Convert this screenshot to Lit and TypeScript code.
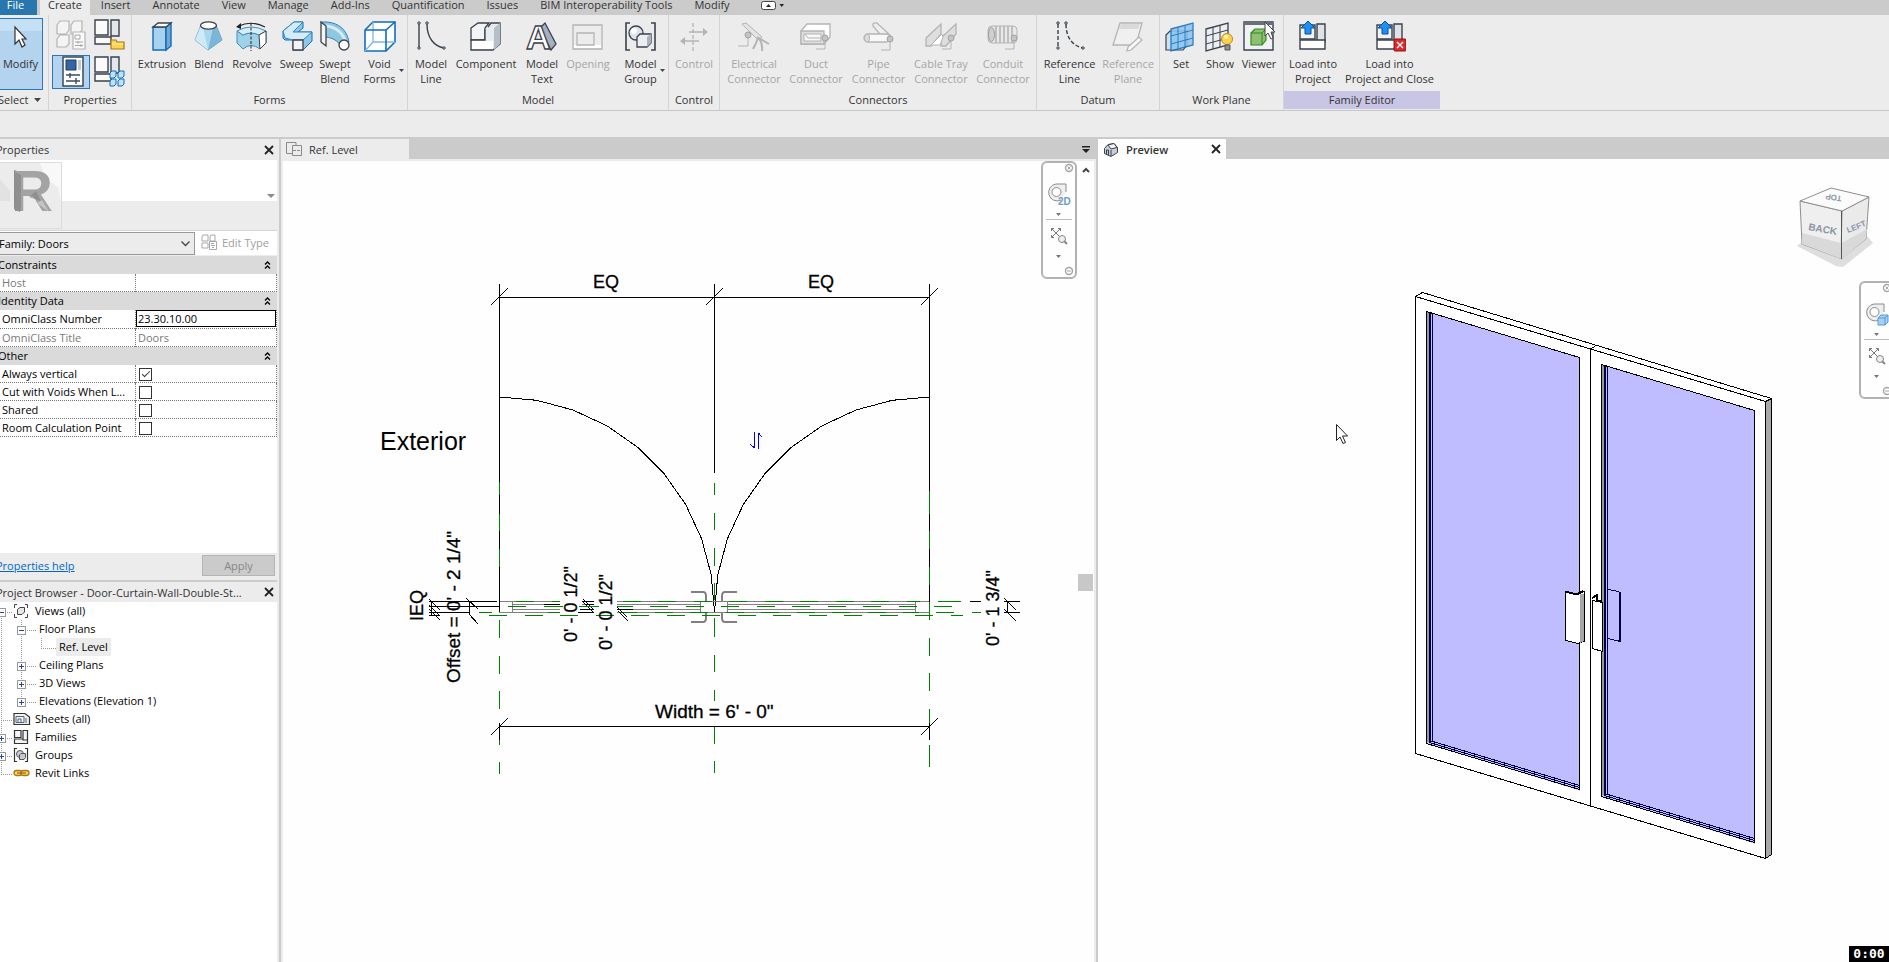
import { LitElement, html, svg, css, nothing } from 'lit';
import { customElement, property, state } from 'lit/decorators.js';
import { classMap } from 'lit/directives/class-map.js';
import { styleMap } from 'lit/directives/style-map.js';

/* ---------- Icon shapes, each on a 32 x 32 grid ---------- */

const INK = '#3b424c';
const BLUE = '#0f6cc0';
const DIM = '#b4b4b4';

const connector = (x: number, y: number) => svg`
  <path d="M${x} ${y}V${y + 11}H${x - 9}" fill="none" stroke=${DIM}/>
  <circle cx=${x} cy=${y} r="3" fill="#c4c4c4" stroke="#a2a2a2"/>`;

const folderPlan = svg`
  <path d="M1 1H14V16H1Z" fill="#fafafa" stroke=${INK} stroke-width="1.4"/>
  <path d="M17 1H25V17H17Z" fill="#e3e6ea" stroke=${INK} stroke-width="1.4"/>
  <path d="M1 18H17V25H1Z" fill="#fafafa" stroke=${INK} stroke-width="1.4"/>`;

const loadArrow = svg`
  <path d="M3 5H18V19H3Z" fill="#f2f3f5" stroke=${INK} stroke-width="1.4"/>
  <path d="M20 4H28V22H20Z" fill="#dfe3e8" stroke=${INK} stroke-width="1.4"/>
  <path d="M3 20H28V29H3Z" fill="#fff" stroke=${INK} stroke-width="1.4"/>
  <path d="M11 1L18 8H14V14H8V8H4Z" fill="#1e8ff5" stroke="#0b4f9c"/>`;

const grid = (stroke: string, fill: string) => svg`
  <path d="M4 8L26 2V24L4 30Z" fill=${fill} stroke=${stroke} stroke-width="1.3"/>
  <path d="M11 6V28M18 4V26M4 15L26 9M4 23L26 17" fill="none" stroke=${stroke}/>`;

const curveLine = (dash: string) => svg`
  <path d="M4 4V28" fill="none" stroke=${INK} stroke-width="1.4" stroke-dasharray=${dash}/>
  <path d="M12 4C12 18 19 26 29 28" fill="none" stroke=${INK} stroke-width="1.4" stroke-dasharray=${dash}/>
  <path d="M3 2H5V4H3ZM3 27H5V29H3ZM11 2H13V4H11ZM28 27H30V29H28Z" fill="#fff" stroke=${INK}/>`;

const ICONS: Record<string, unknown> = {
  modify: svg`<path d="M10 7V24L14 20L17 27L20 25L17 19H21Z" fill="#fff" stroke="#333" stroke-width="1.2"/>`,
  typeProps: svg`
    <g fill="#f4f4f4" stroke=${DIM} stroke-width="1.2">
      <path d="M1 6L4 2H13V11L10 15H1ZM15 6L18 2H26V11L23 15H15ZM1 20L4 16H13V25L10 28H1Z"/>
      <path d="M17 13H29V30H17Z" fill="#fafafa"/></g>
    <path d="M19 16H24V20H19ZM19 23H27M19 26.500H27M22 22V25M25 25V28" fill="none" stroke="#a8a8a8"/>`,
  familyTypes: svg`${folderPlan}
    <path d="M17 21V30H30V23H23L22 21Z" fill="#ffd34d" stroke="#a9781b" stroke-width="1.2"/>
    <path d="M18 25H29" stroke="#fff0b8"/>`,
  properties: svg`
    <path d="M7 1H27V30H7Z" fill="#fff" stroke="#3c4a5c" stroke-width="1.5"/>
    <path d="M10 4H20V14H10Z" fill="#3465a4" stroke="#1f3b63"/>
    <path d="M22 4H25V14H22Z" fill="#c2cad4"/>
    <path d="M10 19H24M10 25H24M14 17V22M20 22V28" stroke="#3c4a5c" stroke-width="1.4"/>`,
  category: svg`${folderPlan}
    <g fill="#bfe2f7" stroke=${BLUE}><path d="M16 17L18 15H22V20L20 22H16ZM24 17L26 15H30V20L28 22H24ZM16 25L18 23H22V28L20 30H16ZM24 25L26 23H30V28L28 30H24Z"/></g>`,
  extrusion: svg`
    <path d="M7 7H20V30H7Z" fill="#a9d2ee" stroke=${BLUE} stroke-width="1.4"/>
    <path d="M20 7L25 3V26L20 30Z" fill="#6fa9d2" stroke=${BLUE} stroke-width="1.4"/>
    <path d="M7 7L12 3H25L20 7Z" fill="#fff" stroke=${INK} stroke-width="1.3"/>`,
  blend: svg`
    <path d="M8 5L2 20L15 30L29 20L23 5Z" fill="#a9d8ee" stroke="#5b9fc4"/>
    <path d="M10 8L15 30L2 20L8 5Z" fill="#cfeaf6"/><path d="M20 8L15 30L29 20L23 5Z" fill="#7cb6d6"/>
    <ellipse cx="15.500" cy="5.500" rx="8" ry="3.600" fill="#fdfdfd" stroke=${INK} stroke-width="1.3"/>`,
  revolve: svg`
    <path d="M1 11L7 15Q15 11 23 15L30 11V23L24 29Q15 22 7 29L1 23Z" fill="#9fd2e8" stroke="#3d8fbd"/>
    <path d="M1 11Q15 3 30 11L23 15Q15 11 7 15Z" fill="#d8eef6" stroke="#3d8fbd"/>
    <path d="M23 15L30 11V23L24 29Z" fill="#fff" stroke=${INK}/>
    <path d="M15 3V31" stroke="#222" stroke-dasharray="3 1.500"/>
    <path d="M3 6Q15 0 29 7" fill="none" stroke="#222" stroke-width="1.2"/><path d="M0 7L5 3V9Z" fill="#222"/>`,
  sweep: svg`
    <path d="M2 11L13 2H22V8L17 12H31V21L22 30H12V20H4L2 18Z" fill="#8fc8e6" stroke=${BLUE}/>
    <path d="M2 11L13 2H22L12 12H31L22 20H12L4 18Z" fill="#d5ecf8" stroke="#2f86bd"/>
    <path d="M12 20H22V30H12Z" fill="#f4f4f4" stroke=${INK} stroke-width="1.3"/>`,
  sweptBlend: svg`
    <path d="M2 2H8C20 3 28 10 30 22L22 26C19 21 14 18 7 17Z" fill="#8fc8de" stroke="#2f86bd"/>
    <path d="M7 6C17 7 24 13 26 21" stroke="#d5ecf8" stroke-width="3" fill="none"/>
    <path d="M2 2L7 6V26L2 22Z" fill="#f4f4f4" stroke=${INK} stroke-width="1.3"/>
    <circle cx="25" cy="25" r="5" fill="#fff" stroke=${INK} stroke-width="1.3"/>`,
  voidForms: svg`
    <path d="M1 10L9 2H31V22L22 31H1Z" fill="#fff" stroke=${BLUE} stroke-width="1.6"/>
    <path d="M9 2V22H31M9 22L1 31" fill="none" stroke="#7db5e6" stroke-width="1.3"/>
    <path d="M1 10H22V31M22 10L31 2" fill="none" stroke=${BLUE} stroke-width="1.6"/>`,
  modelLine: curveLine('none'),
  component: svg`
    <path d="M1 8L8 3H19L15 8V20H1Z" fill="#f3f4f6" stroke=${INK} stroke-width="1.3"/>
    <path d="M18 7L21 3H30V24L23 30H1V20H15V9" fill="#e8ebef" stroke=${INK} stroke-width="1.3"/>
    <path d="M24 8L30 3V24L24 30Z" fill="#b7bec8"/><path d="M2 21H23V29H2Z" fill="#fff"/>`,
  modelText: svg`
    <path d="M19 3L30 24L25 30L14 8Z" fill="#a6b0c4" stroke=${INK} stroke-width="1.3"/>
    <text x="0" y="29" font-family="Liberation Sans" font-weight="700" font-size="34" fill="#fff" stroke=${INK} stroke-width="1.3">A</text>`,
  opening: svg`
    <path d="M1 5H30V29H1Z" fill="#ececec" stroke=${DIM} stroke-width="1.3"/>
    <path d="M2 25H29V28H2Z" fill="#fff"/><path d="M5 13H22V25H5Z" fill="none" stroke=${DIM} stroke-width="1.3"/>`,
  modelGroup: svg`
    <path d="M5 3H1V30H5M26 3H30V30H26" fill="none" stroke=${INK} stroke-width="1.6"/>
    <circle cx="11" cy="13" r="7" fill="#dfe3ea" stroke=${INK} stroke-width="1.3"/><circle cx="9" cy="11" r="3" fill="#fff"/>
    <path d="M12 17L15 14H26V23L22 27H12Z" fill="#eceef2" stroke=${INK} stroke-width="1.3"/>
    <path d="M22 17L26 14V23L22 27Z" fill="#aab2c2"/>`,
  control: svg`
    <path d="M15 3V31" stroke=${DIM} stroke-width="1.3" stroke-dasharray="4 2"/>
    <path d="M11 12H26M6 21H21" stroke=${DIM} stroke-width="1.3"/><path d="M25 8L30 12L25 16ZM7 17L2 21L7 25Z" fill=${DIM}/>`,
  electrical: svg`
    <path d="M4 4L8 3L24 17L20 20Z" fill="#e4e4e4" stroke=${DIM}/><path d="M19 17L31 24M21 18Q25 24 24 31M20 18Q18 24 15 29" fill="none" stroke=${DIM} stroke-width="2"/>
    <path d="M10 15V26H0" fill="none" stroke=${DIM}/><circle cx="10" cy="15" r="3" fill="#c4c4c4" stroke="#a2a2a2"/>`,
  duct: svg`
    <path d="M1 11L7 4H30V17L24 24H1Z" fill="#fff" stroke=${DIM} stroke-width="1.3"/>
    <path d="M1 11H24V24H1Z" fill="#dedede" stroke=${DIM} stroke-width="1.3"/><path d="M4 14H21V21H4Z" fill="#f8f8f8" stroke=${DIM}/>
    <path d="M5 14L8 18H21" fill="none" stroke=${DIM}/>${connector(25, 18)}`,
  pipe: svg`
    <path d="M10 6Q9 2 14 3L28 16L21 19Z" fill="#eee" stroke=${DIM} stroke-width="1.3"/>
    <rect x="1" y="14" width="26" height="8" rx="4" fill="#f8f8f8" stroke=${DIM} stroke-width="1.3"/>
    <ellipse cx="4" cy="18" rx="2.500" ry="4" fill="#ddd" stroke=${DIM}/>${connector(27, 19)}`,
  tray: svg`
    <path d="M1 18L16 4V14L6 26H1ZM16 18L31 4V14L21 26H16Z" fill="#dedede" stroke=${DIM} stroke-width="1.3"/>
    <path d="M6 25L17 14L18 17L15 25Z" fill="#fff" stroke=${DIM}/>${connector(26, 18)}`,
  conduit: svg`
    <rect x="1" y="6" width="29" height="17" rx="4" fill="#e9e9e9" stroke=${DIM}/>
    <path d="M9 6V23M13 6V23M17 6V23M21 6V23M25 6V23" stroke=${DIM} stroke-width="1.6"/>
    <ellipse cx="4.500" cy="14.500" rx="3" ry="7" fill="#cfcfcf" stroke="#9b9b9b"/>${connector(27, 18)}`,
  refLine: curveLine('4 2'),
  refPlane: svg`
    <path d="M8 3H30L24 25H1Z" fill="#f0f0f0" stroke=${DIM} stroke-width="1.3"/><path d="M9 4H28L26 9H7Z" fill="#dadada"/>
    <path d="M16 27L27 17L30 20L19 30L15 31Z" fill="#f6f6f6" stroke=${DIM} stroke-width="1.2"/>`,
  setPlane: svg`
    <path d="M1 15L5 11H22V25L18 30H1Z" fill="#cfe0ec" stroke=${INK} stroke-width="1.2"/>
    <g transform="translate(2 1)" opacity="0.850">${grid('#0f6cc0', '#8cc4ee')}</g>`,
  showPlane: svg`
    <g transform="translate(-2 1)">${grid(INK, '#eceef1')}</g>
    <circle cx="23" cy="19" r="5.500" fill="#ffd24a" stroke="#c08a1c"/><circle cx="22" cy="17" r="2" fill="#fff3c4"/>
    <path d="M21 25H26V30H21Z" fill="#8a8f98" stroke="#555"/>`,
  viewer: svg`
    <path d="M1 2H30V30H1Z" fill="#f1f2f3" stroke=${INK} stroke-width="1.4"/><path d="M1 2H30V5H1Z" fill="#6b7078"/>
    <path d="M8 13L12 9H23V20L19 25H8Z" fill="#8fbf72" stroke="#2f8a23" stroke-width="1.2"/><path d="M8 13H19V25M19 13L23 9" fill="none" stroke="#2f8a23"/>
    <path d="M22 2V16L25 13L28 19L30 18L28 12H32Z" fill="#fff" stroke="#444"/>`,
  load: loadArrow,
  loadClose: svg`${loadArrow}
    <rect x="20" y="19" width="12" height="12" rx="1" fill="#d92b2b" stroke="#8c1414"/><path d="M23 22L29 28M29 22L23 28" stroke="#fff" stroke-width="1.4"/>`,
};

const icon = (name: string) =>
  html`<svg class="icon" width="32" height="32" viewBox="0 0 32 32" aria-hidden="true">${ICONS[name]}</svg>`;

const closeGlyph = html`<svg width="10" height="10" viewBox="0 0 10 10" aria-hidden="true">
  <path d="M1 1L9 9M9 1L1 9" stroke="#222" stroke-width="1.8"/></svg>`;

/* ---------- Data ---------- */

interface Tool { icon: string; text: string; width: number; off?: boolean; more?: boolean }
interface Panel { title: string; width: number; tools: Tool[]; accent?: boolean }

const TABS = ['Create', 'Insert', 'Annotate', 'View', 'Manage', 'Add-Ins', 'Quantification', 'Issues', 'BIM Interoperability Tools', 'Modify'];

const PANELS: Panel[] = [
  { title: 'Forms', width: 276, tools: [
    { icon: 'extrusion', text: 'Extrusion', width: 54 }, { icon: 'blend', text: 'Blend', width: 40 },
    { icon: 'revolve', text: 'Revolve', width: 46 }, { icon: 'sweep', text: 'Sweep', width: 43 },
    { icon: 'sweptBlend', text: 'Swept\nBlend', width: 34 }, { icon: 'voidForms', text: 'Void\nForms', width: 55, more: true }] },
  { title: 'Model', width: 261, tools: [
    { icon: 'modelLine', text: 'Model\nLine', width: 40 }, { icon: 'component', text: 'Component', width: 70 },
    { icon: 'modelText', text: 'Model\nText', width: 42 }, { icon: 'opening', text: 'Opening', width: 50, off: true },
    { icon: 'modelGroup', text: 'Model\nGroup', width: 55, more: true }] },
  { title: 'Control', width: 51, tools: [{ icon: 'control', text: 'Control', width: 44, off: true }] },
  { title: 'Connectors', width: 317, tools: [
    { icon: 'electrical', text: 'Electrical\nConnector', width: 62, off: true }, { icon: 'duct', text: 'Duct\nConnector', width: 62, off: true },
    { icon: 'pipe', text: 'Pipe\nConnector', width: 63, off: true }, { icon: 'tray', text: 'Cable Tray\nConnector', width: 62, off: true },
    { icon: 'conduit', text: 'Conduit\nConnector', width: 62, off: true }] },
  { title: 'Datum', width: 123, tools: [
    { icon: 'refLine', text: 'Reference\nLine', width: 59 }, { icon: 'refPlane', text: 'Reference\nPlane', width: 58, off: true }] },
  { title: 'Work Plane', width: 124, tools: [
    { icon: 'setPlane', text: 'Set', width: 36 }, { icon: 'showPlane', text: 'Show', width: 42 }, { icon: 'viewer', text: 'Viewer', width: 36 }] },
  { title: 'Family Editor', width: 156, accent: true, tools: [
    { icon: 'load', text: 'Load into\nProject', width: 52 }, { icon: 'loadClose', text: 'Load into\nProject and Close', width: 101 }] },
];

/* ---------- Ribbon ---------- */

@customElement('rv-ribbon')
export class RvRibbon extends LitElement {
  @state() private active = 'Create';

  static styles = css`
    :host { display: block; color: #333; font-size: 11px; }
    button { font: inherit; color: inherit; border: 0; padding: 0; background: none; cursor: default; }
    .tabs { display: flex; height: 20px; background: #cbcbcb; line-height: 20px; }
    .tab { padding: 0 11px; white-space: nowrap; }
    .tab.on { background: #ececec; padding: 0 8px; }
    .file { background: #2777ae; color: #fff; width: 43px; margin-right: 3px; }
    .fold { display: flex; align-items: center; gap: 5px; padding-left: 20px; }
    .panels { display: flex; height: 95px; background: #ececec; border-bottom: 1px solid #c6c6c6; }
    .panel { display: flex; flex: none; flex-direction: column; box-sizing: border-box; border-right: 1px solid #d4d4d4; padding-top: 3px; }
    .panel:last-child { border-right: 0; }
    .tools { display: flex; flex: 1; padding-left: 3px; }
    .tool { position: relative; display: flex; flex: none; flex-direction: column; align-items: center; gap: 4px; padding-top: 2px; line-height: 15px; white-space: pre; text-align: center; }
    .tool:disabled { color: #a6a6a6; }
    .more { position: absolute; right: 3px; top: 51px; }
    .title { height: 18px; line-height: 18px; text-align: center; margin-bottom: 1px; }
    .accent { background: #c8c6e4; }
    .select { width: 55px; }
    .select .tools { padding-left: 0; }
    .modify { width: 49px; height: 72px; box-sizing: border-box; padding: 1px 0 0 4px; border: 1px solid #2b77bd; background: linear-gradient(#c5dff4 0 12px, #b3d3ef 12px); }
    .pick { display: flex; align-items: center; gap: 6px; padding-left: 4px; }
    .props { width: 83px; }
    .grid { display: grid; grid-template-columns: 38px 38px; grid-auto-rows: 34px; row-gap: 3px; justify-content: center; flex: 1; }
    .small { display: grid; place-items: center; box-sizing: border-box; border: 1px solid transparent; padding: 0 0 2px 2px; }
    .small svg { display: block; }
    .small.on { border-color: #2b77bd; background: #b3d3ef; }
    .options { height: 26px; background: #ececec; }
  `;

  private tool(t: Tool) {
    return html`<button class="tool" ?disabled=${t.off} style=${styleMap({ width: `${t.width}px` })}>${icon(t.icon)}<span>${t.text}</span>${
      t.more ? html`<svg class="more" width="5" height="3" viewBox="0 0 5 3" aria-hidden="true"><path d="M0 0H5L2.500 3Z" fill="#444"/></svg>` : nothing}</button>`;
  }

  render() {
    return html`
      <nav class="tabs">
        <button class="file">File</button>
        ${TABS.map((t) => html`<button class=${classMap({ tab: true, on: t === this.active })} @click=${() => (this.active = t)}>${t}</button>`)}
        <button class="fold" aria-label="Minimize">
          <svg width="23" height="9" viewBox="0 0 23 9"><rect x="0.500" y="0.500" width="14" height="8" rx="2" fill="#fff" stroke="#444"/>
            <path d="M5 6L7.500 3L10 6ZM18.500 3H23L20.750 6Z" fill="#222"/></svg>
        </button>
      </nav>
      <div class="panels">
        <section class="panel select">
          <div class="tools"><button class="tool modify">${icon('modify')}<span>Modify</span></button></div>
          <button class="title pick">Select <svg width="7" height="4" viewBox="0 0 7 4" aria-hidden="true"><path d="M0 0H7L3.500 4Z" fill="#444"/></svg></button>
        </section>
        <section class="panel props">
          <div class="grid">
            <button class="small" disabled aria-label="Type Properties">${icon('typeProps')}</button>
            <button class="small" aria-label="Family Types">${icon('familyTypes')}</button>
            <button class="small on" aria-label="Properties">${icon('properties')}</button>
            <button class="small" aria-label="Family Category">${icon('category')}</button>
          </div>
          <div class="title">Properties</div>
        </section>
        ${PANELS.map((p) => html`<section class="panel" style=${styleMap({ width: `${p.width}px` })}>
          <div class="tools">${p.tools.map((t) => this.tool(t))}</div>
          <div class=${classMap({ title: true, accent: !!p.accent })}>${p.title}</div>
        </section>`)}
      </div>
      <div class="options"></div>`;
  }
}

/* ---------- Properties palette ---------- */

const CHECKS = [
  { id: 'vertical', text: 'Always vertical', on: true },
  { id: 'voids', text: 'Cut with Voids When L...', on: false },
  { id: 'shared', text: 'Shared', on: false },
  { id: 'room', text: 'Room Calculation Point', on: false },
];

@customElement('rv-properties')
export class RvProperties extends LitElement {
  static styles = css`
    :host { display: flex; flex-direction: column; background: #fff; font-size: 11px; color: #000; }
    button, input, select { font: inherit; color: inherit; }
    .head { display: flex; justify-content: space-between; align-items: center; height: 21px; padding: 0 3px 0 2px; background: #ececec; color: #333; }
    .head button { display: grid; border: 0; background: none; padding: 0 0 0 4px; }
    .type { display: flex; justify-content: space-between; align-items: flex-start; height: 70px; background: linear-gradient(#fff 0 41px, #ececec 41px); border-bottom: 1px solid #d6d6d6; }
    .thumb { width: 67px; height: 65px; margin-top: 2px; border: 1px solid #dcdcdc; border-left: 0; background: #ececec; }
    .drop { margin: 34px 2px 0 0; }
    .filter { display: flex; align-items: flex-start; gap: 6px; height: 23px; padding-top: 1px; border-bottom: 1px solid #ececec; }
    .pick { position: relative; width: 201px; }
    .pick select { appearance: none; width: 201px; height: 23px; padding: 0 4px; border: 1px solid #999; border-radius: 0; background: #ececec; display: block; }
    .pick svg { position: absolute; right: 5px; top: 9px; pointer-events: none; }
    .edit { display: flex; align-items: center; gap: 5px; height: 20px; padding: 0; border: 0; background: none; color: #a0a0a0; }
    table { width: 100%; border-spacing: 0; table-layout: fixed; }
    tr { height: 18px; }
    th, td { box-sizing: border-box; height: 18px; padding: 0 0 1px; line-height: 15px; font-weight: 400; text-align: left; white-space: nowrap; }
    .group th { padding: 0 6px 1px 4px; background: #dadada; }
    .group div { display: flex; justify-content: space-between; align-items: center; }
    .name { width: 141px; border-bottom: 1px dotted #777; }
    th.name { padding-left: 8px; }
    .value { border: 1px dotted #777; border-top: 0; }
    .dim { color: #7a7a7a; }
    .value span { padding-left: 2px; }
    .value input[type='text'] { display: block; box-sizing: border-box; width: 100%; height: 17px; padding: 0 1px; border: 1px solid #000; }
    .value input[type='checkbox'] { appearance: none; display: block; box-sizing: border-box; width: 13px; height: 13px; margin: 3px 0 0 3px; border: 1px solid #333; }
    .value input:checked::before { content: ''; display: block; width: 7px; height: 3px; margin: 2px 0 0 2px; border: solid #333; border-width: 0 0 1px 1px; transform: rotate(-45deg); }
    .fill { flex: 1; }
    .foot { display: flex; justify-content: space-between; align-items: center; height: 27px; padding: 0 2px 2px; box-sizing: border-box; background: #ececec; }
    .foot a { color: #0066cc; }
    .foot button { width: 73px; height: 21px; border: 1px solid #b4b4b4; background: #cbcbcb; color: #888; padding: 0; }
  `;

  private group(title: string) {
    return html`<tr class="group"><th colspan="2"><div>${title}
      <svg width="7" height="8" viewBox="0 0 7 8" aria-hidden="true"><path d="M1 3.500L3.500 1L6 3.500M1 7.500L3.500 5L6 7.500" fill="none" stroke="#000" stroke-width="1.3"/></svg>
    </div></th></tr>`;
  }

  render() {
    return html`
      <div class="head">Properties<button aria-label="Close">${closeGlyph}</button></div>
      <div class="type">
        <svg class="thumb" viewBox="-6 162 67 65" aria-hidden="true">
          <path d="M-6 162H40L46 178L58 186L61 200V162H-6Z" fill="#f8f8f8"/><path d="M-6 176L0 178L10 190V200H-6Z" fill="#e2e2e2"/>
          <path d="M14 169L20 171V211L14 208Z" fill="#8a8a8a"/>
          <text x="11" y="210" font-family="Liberation Sans" font-weight="700" font-size="58" fill="#a3a3a3">R</text>
          <path d="M15 171L21 174V210H15ZM29 196L36 190L41 200Z" fill="#868686" opacity="0.700"/>
          <path d="M37 202L42 199L49 211Z" fill="#c4c4c4"/>
        </svg>
        <svg class="drop" width="8" height="4" viewBox="0 0 8 4" aria-hidden="true"><path d="M0 0H8L4 4Z" fill="#8a8a8a"/></svg>
      </div>
      <div class="filter">
        <div class="pick"><select aria-label="Type filter"><option>Family: Doors</option></select>
          <svg width="9" height="6" viewBox="0 0 9 6" aria-hidden="true"><path d="M0.500 0.500L4.500 4.500L8.500 0.500" fill="none" stroke="#444" stroke-width="1.3"/></svg></div>
        <button class="edit" disabled><svg width="16" height="16" viewBox="0 0 16 16" aria-hidden="true">
          <path d="M1 3L2 1H7V7H1ZM9 3L10 1H14V7H9ZM1 9H7V14H1ZM8.500 7.500H15.500V15.500H8.500ZM10 9.500H13M10 11.500H14M11 13.500H13" fill="none" stroke="#a8a8a8"/></svg>Edit Type</button>
      </div>
      <table>
        <colgroup><col class="name"><col></colgroup>
        ${this.group('Constraints')}
        <tr><th class="name dim">Host</th><td class="value"></td></tr>
        ${this.group('Identity Data')}
        <tr><th class="name"><label for="omni">OmniClass Number</label></th><td class="value"><input id="omni" type="text" .value=${'23.30.10.00'}></td></tr>
        <tr><th class="name dim">OmniClass Title</th><td class="value dim"><span>Doors</span></td></tr>
        ${this.group('Other')}
        ${CHECKS.map((c) => html`<tr><th class="name"><label for=${c.id}>${c.text}</label></th><td class="value"><input id=${c.id} type="checkbox" .checked=${c.on}></td></tr>`)}
      </table>
      <div class="fill"></div>
      <div class="foot"><a href="#help">Properties help</a><button disabled>Apply</button></div>`;
  }
}

/* ---------- Project browser ---------- */

interface Node { text: string; level: 0 | 1 | 2; sign?: '+' | '-'; glyph?: string; lit?: boolean; last?: boolean; top?: boolean }

const NODES: Node[] = [
  { text: 'Views (all)', level: 0, sign: '-', glyph: 'views', top: true },
  { text: 'Floor Plans', level: 1, sign: '-' },
  { text: 'Ref. Level', level: 2, lit: true },
  { text: 'Ceiling Plans', level: 1, sign: '+' },
  { text: '3D Views', level: 1, sign: '+' },
  { text: 'Elevations (Elevation 1)', level: 1, sign: '+', last: true },
  { text: 'Sheets (all)', level: 0, glyph: 'sheets' },
  { text: 'Families', level: 0, sign: '+', glyph: 'families' },
  { text: 'Groups', level: 0, sign: '+', glyph: 'groups' },
  { text: 'Revit Links', level: 0, glyph: 'links', last: true },
];

const GLYPHS: Record<string, unknown> = {
  views: svg`<path d="M3 0.500H0.500V4M11 0.500H13.500V4M3 13.500H0.500V10M11 13.500H13.500V10" fill="none" stroke="#444"/><path d="M3.500 5.500L6 3.500H10.500V8L8 10.500H3.500Z" fill="#e8e8e8" stroke="#444"/>`,
  sheets: svg`<path d="M0 1.500H11L15.500 5V12.500H0Z" fill="#f2f2f2" stroke="#333" stroke-width="1.2"/><path d="M2 4.500H10V10.500H2ZM4 10V7H7V10M12 6V11" fill="none" stroke="#567"/>`,
  families: svg`<path d="M0.500 0.500H7V7.500H0.500ZM9 0.500H13.500V10H9ZM0.500 9H9V10H13.500V13.500H0.500Z" fill="#f4f4f4" stroke="#333" stroke-width="1.2"/>`,
  groups: svg`<path d="M3 0.500H0.500V13.500H3M11 0.500H13.500V13.500H11" fill="none" stroke="#333" stroke-width="1.2"/><circle cx="6" cy="6" r="3.500" fill="#ccd" stroke="#555"/><path d="M5.500 7L7 5.500H11.500V9.500L10 11.500H5.500Z" fill="#c4c8d0" stroke="#555"/>`,
  links: svg`<rect x="0" y="4.500" width="8" height="5" rx="2.500" fill="#ffd34d" stroke="#a9781b" stroke-width="1.3"/><rect x="7" y="4.500" width="8" height="5" rx="2.500" fill="#ffd34d" stroke="#a9781b" stroke-width="1.3"/><path d="M3 7H12" stroke="#7a540e"/>`,
};

@customElement('rv-browser')
export class RvBrowser extends LitElement {
  static styles = css`
    :host { display: block; background: #fff; font-size: 11px; color: #000; }
    .head { display: flex; justify-content: space-between; align-items: center; height: 20px; padding: 0 3px 0 2px; background: #ececec; color: #333; white-space: nowrap; }
    .head button { display: grid; border: 0; background: none; padding: 0; }
    ul { list-style: none; margin: 0; padding: 0; }
    li { display: flex; height: 18px; line-height: 18px; }
    .text { white-space: nowrap; padding: 0 3px; }
    .lit { background: #ececec; }
    .dots { stroke: #999; stroke-dasharray: 1 1; fill: none; }
  `;

  /* Guide lines, expander box and glyph left of one row. */
  private guide(n: Node) {
    const start = [38, 42, 62][n.level];
    const at = [7, 27, 47][n.level];
    const stop = n.level === 0 && n.last ? 11 : 18;
    const outer = svg`<path class="dots" d="M7.500 ${n.top ? 10 : 0}V${stop}"/>`;
    const mid = n.level === 1 ? svg`<path class="dots" d="M27.500 0V${n.last ? 11 : 18}"/>` : n.level === 2
      ? svg`<path class="dots" d="M27.500 0V18M47.500 0V11"/>` : nothing;
    return html`<svg width=${start} height="18" viewBox="0 0 ${start} 18" aria-hidden="true">
      ${outer}${mid}
      <path class="dots" d="M${at} 10.500H${n.level === 0 ? 18 : start}"/>
      ${n.sign ? svg`<rect x=${at - 3.5} y="6.500" width="8" height="8" fill="#fff" stroke="#999"/>
        <path d="M${at - 2} 10.500H${at + 3}${n.sign === '+' ? `M${at + 0.5} 8V13` : ''}" stroke="#24479a"/>` : nothing}
      ${n.glyph ? svg`<g transform="translate(20 2)">${GLYPHS[n.glyph]}</g>` : nothing}
    </svg>`;
  }

  render() {
    return html`
      <div class="head">Project Browser - Door-Curtain-Wall-Double-St...<button aria-label="Close">${closeGlyph}</button></div>
      <ul>${NODES.map((n) => html`<li>${this.guide(n)}<span class=${classMap({ text: true, lit: !!n.lit })}>${n.text}</span></li>`)}</ul>`;
  }
}

/* ---------- Navigation bar ---------- */

@customElement('rv-navbar')
export class RvNavbar extends LitElement {
  @property() mode = '2d';
  static styles = css`:host { display: block; } svg { display: block; }`;
  render() {
    return html`<svg width="36" height="119" viewBox="0 0 36 119" aria-hidden="true">
      <rect x="1" y="1" width="34" height="116" rx="5" fill="#fefefe" stroke="#b2b2b2" stroke-width="2"/>
      <g fill="none" stroke="#a4a4a4">
        <circle cx="28" cy="7" r="3.500" stroke-width="1.4"/><path d="M26.500 5.500L29.500 8.500M29.500 5.500L26.500 8.500"/>
        <circle cx="28" cy="110" r="3.500" stroke-width="1.4"/><path d="M26 110H30"/>
        <path d="M25 31V23H15A8.500 8.500 0 1 0 20 39" fill="#efefef" stroke="#8c8c8c"/><circle cx="15.500" cy="31" r="4.500" fill="#fefefe" stroke="#8c8c8c"/>
        <path d="M5 58.500H31" stroke="#bdbdbd"/>
        <path d="M11 68L19 76M19 68L11 76M10.500 70V67.500H13M17 67.500H19.500V70M10.500 74V76.500H13" stroke="#777"/>
        <circle cx="21" cy="78" r="3.500" fill="#eee" stroke="#888"/><path d="M23 80L26 83" stroke="#888" stroke-width="2"/>
      </g>
      <path d="M15 52H20L17.500 55ZM15 94H20L17.500 97Z" fill="#777"/>
      ${this.mode === '2d'
        ? svg`<text x="17" y="44" font-family="Liberation Sans" font-size="10" font-weight="700" fill="#6d9cc8">2D</text>`
        : svg`<path d="M19 37L22 34H29V41L26 44H19Z" fill="#a8d0f0" stroke="#5b9bd0"/><path d="M19 37H26V44M26 37L29 34" fill="none" stroke="#5b9bd0"/>`}
    </svg>`;
  }
}

/* ---------- Plan drawing ---------- */

/* Door swing as nine straight chords around the hinge. */
const swing = (hinge: number, dir: 1 | -1) =>
  Array.from({ length: 10 }, (_, i) => {
    const a = (i * Math.PI) / 18;
    return `${(hinge + dir * 215 * Math.cos(a)).toFixed(1)},${(612 - 215 * Math.sin(a)).toFixed(1)}`;
  }).join(' ');

@customElement('rv-plan')
export class RvPlan extends LitElement {
  static styles = css`
    :host { display: flex; background: #fefefe; min-width: 0; min-height: 0; }
    .sheet { position: relative; flex: 1; min-width: 0; overflow: hidden; }
    .draw { display: block; width: 100%; height: 100%; }
    .thin { shape-rendering: crispEdges; fill: none; stroke: #000; }
    .ref { stroke: #008000; }
    .body { stroke: #808080; }
    .flip { stroke: #0000ff; }
    .dash { stroke-dasharray: 18 17.5; }
    .note { font: 18px 'Liberation Sans', Arial, sans-serif; stroke: #000; stroke-width: 0.3; }
    .size { font-size: 19px; }
    .room { font-size: 25px; stroke: none; }
    rv-navbar { position: absolute; right: 0; top: 0; }
    .scroll { display: flex; flex-direction: column; align-items: center; width: 17px; padding-top: 6px; box-sizing: border-box; }
    .before { flex: 401; } .after { flex: 371; }
    .grip { width: 15px; height: 17px; background: #c8c8c8; }
  `;

  render() {
    return html`
      <div class="sheet">
        <svg class="draw" role="img" aria-label="Floor plan">
          <g transform="translate(-283 -161)">
            <g class="thin">
              <path d="M499.500 284V497M714.500 284V473M929.500 284V492"/>
              <path d="M491 305L508 288M706 305L723 288M921 305L938 288"/>
              <path d="M499 297.500H930M499 726.500H930"/>
              <path d="M491 735L508 718M921 735L938 718"/>
            </g>
            <g class="thin"><polyline points=${swing(499.5, 1)}/><polyline points=${swing(929.5, -1)}/></g>
            <g class="thin body">
              <path d="M499 601.500H930M499 612.500H930M512 604.500H701M512 609.500H701M727 604.500H916M727 609.500H916"/>
              <path d="M512.500 601V612M700.500 601V612M727.500 601V612M915.500 601V612"/>
            </g>
            <g fill="none" stroke="#808080" stroke-width="2">
              <path d="M691 592H703Q706 592 706 596V601M691 622H703Q706 622 706 618V613M737 592H725Q722 592 722 596V601M737 622H725Q722 622 722 618V613"/>
            </g>
            <g class="thin ref">
              <path d="M499.500 482V495M499.500 514V531M499.500 549V567M499.500 620V638M499.500 656V674M499.500 691V709M499.500 740V745M499.500 762V774"/>
              <path d="M714.500 483V495M714.500 513V530M714.500 548V566M714.500 583V600M714.500 618V637M714.500 655V672M714.500 690V701M714.500 727V744M714.500 761V773"/>
              <path d="M929.500 491V514M929.500 531V549M929.500 567V620M929.500 638V656M929.500 673V691M929.500 709V723M929.500 745V767"/>
              <path class="dash" d="M516 601.500H920M508 606.500H956M548 612.500H919M489 615.500H963"/>
              <path d="M479 612.500H492M938 601.500H961M936 612.500H954M972 612.500H981"/>
            </g>
            <path class="thin" d="M499.500 495V514M499.500 531V549M499.500 567V612M499.500 723V740M929.500 514V531M929.500 549V567M929.500 585V602M929.500 723V740"/>
            <rect x="560" y="592" width="22" height="22" fill="#fefefe"/><rect x="594" y="592" width="23" height="22" fill="#fefefe"/>
            <g class="thin">
              <path d="M429 601.500H497M429 606.500H499M429 612.500H470M429 615.500H440M431.500 601V615M469.500 601V615M544 604.500H560M582 601.500H594M585 604.500H594M580 609.500H594M578 612.500H594M617 609.500H633"/>
              <path d="M429 599L440 610M429 605L440 616M429 609L440 620M466 598L478 609M469 614L478 624M583 599L593 609M583 602L593 612M617 607L627 617M618 611L628 621"/>
              <path d="M970 601.500H981M1004 601.500H1020M1004 612.500H1020M1007.500 601V612M1004 598L1016 610M1004 609L1016 621"/>
            </g>
            <path class="thin ref" d="M548 606.500H563M579 606.500H599"/>
            <path class="thin flip" d="M754.500 432V448M754.500 448L750 444M758.500 449V433M758.500 433L762 437"/>
            <g class="note">
              <text x="593" y="288">EQ</text><text x="808" y="288">EQ</text>
              <text class="size" x="655" y="718">Width = 6' - 0"</text>
              <text class="room" x="380" y="450">Exterior</text>
              <text transform="translate(423 621) rotate(-90)">IEQ</text>
              <text class="size" transform="translate(460 683) rotate(-90)">Offset = 0' - 2 1/4"</text>
              <text transform="translate(577 642) rotate(-90)">0' - 0 1/2"</text>
              <text transform="translate(612 650) rotate(-90)">0' - 0 1/2"</text>
              <text transform="translate(999 646) rotate(-90)">0' - 1 3/4"</text>
            </g>
          </g>
        </svg>
        <rv-navbar></rv-navbar>
      </div>
      <div class="scroll">
        <svg width="8" height="6" viewBox="0 0 8 6" aria-hidden="true"><path d="M1 5L4 2L7 5" fill="none" stroke="#444" stroke-width="2"/></svg>
        <div class="before"></div><div class="grip"></div><div class="after"></div>
      </div>`;
  }
}

/* ---------- 3D preview ---------- */

/* One glazed leaf; x and y are the upper left corner of its opening. */
const leaf = (x: number, y: number) => svg`
  <path d="M${x} ${y}L${x + 153} ${y + 46}V${y + 479}L${x} ${y + 432}Z" fill="#bfbdff" stroke="none"/>
  <path d="M${x + 1} ${y}V${y + 430}" stroke="#9a9a9a" stroke-width="2"/>
  <path d="M${x + 3} ${y + 1}V${y + 430}M${x + 4} ${y + 1}V${y + 430}" stroke="#000046"/>
  <path d="M${x + 6} ${y + 2}V${y + 429}" stroke="#000046"/>
  <path d="M${x + 3} ${y + 429}L${x + 153} ${y + 474}M${x + 3} ${y + 431}L${x + 153} ${y + 476}" stroke="#000046"/>
  <path d="M${x} ${y + 432}L${x + 153} ${y + 478}L${x + 153} ${y + 46}L${x} ${y}Z" fill="none"/>`;

@customElement('rv-preview')
export class RvPreview extends LitElement {
  static styles = css`
    :host { display: block; position: relative; overflow: hidden; background: #fefefe; min-width: 0; min-height: 0; }
    .draw { display: block; width: 100%; height: 100%; }
    .model { shape-rendering: crispEdges; stroke: #000; fill: none; }
    .cube { position: absolute; right: 10px; top: 26px; }
    rv-navbar { position: absolute; right: -6px; top: 122px; }
    .face { font: 700 10px 'Liberation Sans', Arial, sans-serif; fill: #8b95a3; stroke: none; }
    .upper { font-size: 8px; }
  `;

  render() {
    return html`
      <svg class="draw" role="img" aria-label="Door preview">
        <g transform="translate(-1098 -159)">
          <g class="model">
            <path d="M1415.500 296.500L1422.500 292.500L1771.500 398.500V854.500L1765.500 858.500L1415.500 753.500Z" fill="#fff"/>
            <path d="M1765.500 401.500L1771.500 398.500V854.500L1765.500 858.500Z" fill="#a8a8a8"/>
            <path d="M1415.500 296.500L1765.500 401.500M1590.500 349V806M1590.500 349L1597 345"/>
            ${leaf(1426.5, 311.5)}${leaf(1601.5, 364.5)}
            <path d="M1565.500 591.500L1577 594.500L1584.500 591.500V641L1578 643.500L1565.500 640.500Z" fill="#fff"/>
            <path d="M1580 594H1584V641L1580 643Z" fill="#a8a8a8" stroke="none"/>
            <path d="M1565 591.500L1577 594.500L1583 591" stroke-width="2"/>
            <path d="M1592.500 600.500L1602.500 602.500V651.500L1592.500 648.500Z" fill="#fff"/>
            <path d="M1592 598L1597 595V600L1602 602" stroke-width="2"/>
            <path d="M1608 589.500L1614 590.500L1620.500 592.500V641.500L1608 638.500M1619.500 592V641" stroke="#000046"/>
          </g>
          <path d="M1336.500 424.500V440.500L1340 437L1343 443.500L1345.500 442.500L1342.500 436H1347.500Z" fill="#fff" stroke="#222"/>
        </g>
      </svg>
      <svg class="cube" width="84" height="90" viewBox="1795 185 84 90" role="img" aria-label="View cube">
        <path d="M1797 246L1803 241L1868 237L1873 243L1843 267L1836 266Z" fill="#dedede"/>
        <g stroke="#8f8f8f" stroke-width="1">
          <path d="M1800 201L1842 211V259L1802 244Z" fill="#efefef"/>
          <path d="M1842 211L1869 197L1866 239L1841 259Z" fill="#eaeaea"/>
          <path d="M1800 201L1831 188L1869 197L1842 211Z" fill="#fbfbfb"/>
        </g>
        <path d="M1802 233L1841 243V259L1802 244ZM1842 243L1867 229L1866 239L1842 259Z" fill="#d9d9d9"/>
        <path d="M1841.500 211V259" stroke="#555"/>
        <g class="face">
          <text transform="translate(1808 230) rotate(10)">BACK</text>
          <text class="upper" transform="translate(1848 233) rotate(-22)">LEFT</text>
          <text class="upper" transform="translate(1842 196) rotate(188)">TOP</text>
        </g>
      </svg>
      <rv-navbar mode="3d"></rv-navbar>`;
  }
}

/* ---------- Application frame ---------- */

@customElement('app-root')
export class AppRoot extends LitElement {
  static styles = css`
    :host { display: block; position: relative; height: 100vh; overflow: hidden; font-family: 'Open Sans', 'Noto Sans', sans-serif; }
    .window { display: flex; flex-direction: column; height: calc(100vh + 5px); margin: -5px 0 0 -6px; background: #ececec; }
    .work { display: flex; flex: 1; min-height: 0; border-top: 2px solid #cbcbcb; }
    .side { display: flex; flex: none; flex-direction: column; width: 283px; border-right: 2px solid #ececec; box-shadow: 2px 0 #cbcbcb; margin-right: 4px; }
    .side rv-properties { flex: 441; min-height: 0; }
    .side rv-browser { flex: 380; min-height: 0; border-top: 2px solid #cbcbcb; }
    .doc { display: flex; flex-direction: column; min-width: 0; }
    .doc > :last-child { flex: 1; }
    .plan { flex: 813 1 0; border-right: 2px solid #cbcbcb; }
    .plan rv-plan { border-top: 2px solid #ececec; border-right: 2px solid #ececec; }
    .view { flex: 791 1 0; }
    .strip { display: flex; justify-content: space-between; height: 20px; background: #cbcbcb; color: #333; font-size: 11px; }
    .strip button { font: inherit; color: inherit; border: 0; padding: 0; background: none; display: flex; align-items: center; }
    .strip .tab { box-sizing: border-box; width: 126px; padding-left: 3px; gap: 7px; background: #ececec; }
    .strip .on { width: 128px; padding: 0 5px 0 5px; gap: 8px; background: #fefefe; font-weight: 600; }
    .strip .on span { flex: 1; text-align: left; }
    .strip .list { padding-right: 6px; }
    .clock { position: absolute; right: 0; bottom: 0; width: 40px; height: 16px; background: #000; color: #fff; font: 700 13px/16px 'DejaVu Sans Mono', monospace; text-align: center; }
  `;

  render() {
    return html`
      <div class="window">
        <rv-ribbon></rv-ribbon>
        <main class="work">
          <aside class="side"><rv-properties></rv-properties><rv-browser></rv-browser></aside>
          <section class="doc plan">
            <div class="strip">
              <button class="tab"><svg width="16" height="14" viewBox="0 0 16 14" aria-hidden="true">
                <path d="M6 11.500H0.500V0.500H10V3.500H15.500V13.500H6.500V3.500H10" fill="none" stroke="#8a8a8a"/><path d="M7 8.500H15" stroke="#8a8a8a" stroke-dasharray="3 1"/></svg>Ref. Level</button>
              <button class="list" aria-label="Views"><svg width="8" height="7" viewBox="0 0 8 7"><path d="M0 0H8V1.500H0ZM0 3H8L4 7Z" fill="#222"/></svg></button>
            </div>
            <rv-plan></rv-plan>
          </section>
          <section class="doc view">
            <div class="strip">
              <button class="tab on"><svg width="15" height="15" viewBox="0 0 15 15" aria-hidden="true">
                <path d="M1.500 6.500L5 2.500L11 1.500L14.500 5.500V10.500L8 14.500L1.500 11.500Z" fill="#c9ced6" stroke="#3a414b"/><path d="M5 3L8 7L14 5.500L11 1.500Z" fill="#f4f4f4" stroke="#3a414b"/><path d="M8 8V14M3.500 12V8H5.500V13" fill="none" stroke="#3a414b"/></svg><span>Preview</span>${closeGlyph}</button>
            </div>
            <rv-preview></rv-preview>
          </section>
        </main>
      </div>
      <div class="clock">0:00</div>`;
  }
}
